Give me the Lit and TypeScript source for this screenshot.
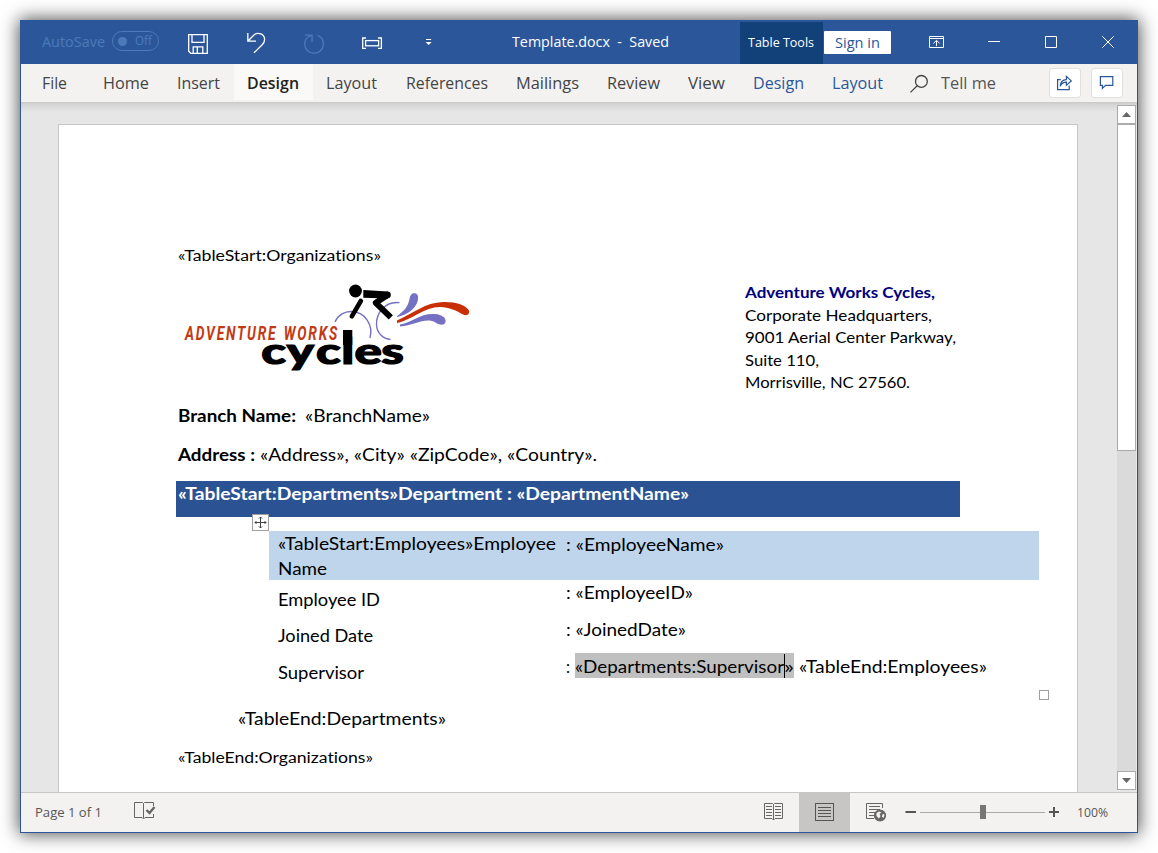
import { LitElement, html, svg, css } from "lit";
import { customElement, property } from "lit/decorators.js";

/** A single run of text, condensed or expanded to an exact advance width. */
@customElement("fit-text")
class FitText extends LitElement {
  @property({ type: Number }) w = 0;
  @property() text = "";
  static styles = css`
    :host { display: inline-block; white-space: pre; vertical-align: baseline; flex: none; font-variant-ligatures: none; }
    .run { display: inline-block; transform-origin: 0 50%; }
  `;
  render() {
    return html`<span class="run">${this.text}</span>`;
  }
  updated() {
    const run = this.renderRoot.querySelector(".run") as HTMLElement;
    run.style.transform = "none";
    const natural = run.getBoundingClientRect().width;
    this.style.width = `${this.w}px`;
    if (natural > 0) {
      run.style.transform = `scaleX(${this.w / natural})`;
      run.style.marginRight = `${this.w - natural}px`;
    }
  }
}

const t = (text: string, w: number) => html`<fit-text .text=${text} .w=${w}></fit-text>`;

@customElement("title-bar")
class TitleBar extends LitElement {
  static styles = css`
    :host { display: flex; height: 44px; background: #2b579a; color: #fff; font: 14px/22px "Open Sans", sans-serif; align-items: flex-start; padding-left: 22px; box-sizing: border-box; }
    svg { display: block; flex: none; }
    .auto { color: #4c7ab8; margin-top: 11px; }
    .toggle { box-sizing: border-box; width: 47px; height: 20px; border: 1px solid #4c7ab8; border-radius: 10px; margin: 11px 0 0 7px; display: flex; align-items: center; padding-left: 5px; gap: 8px; font-size: 12px; line-height: 20px; color: #4c7ab8; }
    .dot { width: 9px; height: 9px; border-radius: 50%; background: #4c7ab8; flex: none; }
    .quick { margin: 11px 0 0 27px; }
    .name { margin: 11px 0 0 78px; }
    .tools { background: #124078; width: 83px; height: 42px; margin: 2px 0 0 71px; padding-left: 8px; box-sizing: border-box; font-size: 12.5px; line-height: 41px; }
    .sign { background: #fff; color: #2b579a; width: 67px; height: 23px; margin: 11px 0 0 1px; padding-left: 11px; box-sizing: border-box; line-height: 24px; border-radius: 1px; }
    .ctl { margin: 13px 0 0 35px; }
  `;
  render() {
    return html`
      <span class="auto">${t("AutoSave", 63)}</span>
      <span class="toggle"><i class="dot"></i>${t("Off", 17)}</span>
      <svg class="quick" width="248" height="24" viewBox="186 31 248 24" fill="none" stroke="#fff" stroke-width="1.3">
        <path d="M188.7 34.7H207.3V53.3H190.8L188.7 51.2ZM192 34.7V42.3H204V34.7M193.2 53V46.8H202.8V53M197.3 47V53" />
        <path d="M247.8 33V41.2H256M248.2 40.8L254.5 34.6C258 31.8 264.6 34 264.6 39.5C264.6 42 263.5 43.5 262 45L254 52.8" />
        <path stroke="#4c7ab8" d="M305 35.2H312V42M311.6 35.6C307.5 36 304.7 40 304.7 44C304.7 49 308.7 53.3 314 53.3C319.4 53.3 323.4 49 323.4 44C323.4 39.8 321 36.5 317.6 35.3" />
        <path d="M366 38H362.7V48.4H366M378 38H381.4V48.4H378" />
        <rect x="365.6" y="40.6" width="13" height="5.2" />
        <path d="M426 39.5H431.2" stroke-width="1" />
        <path d="M425.6 42H431.6L428.6 45Z" fill="#fff" stroke="none" />
      </svg>
      <span class="name">${t("Template.docx  -  Saved", 157)}</span>
      <span class="tools">${t("Table Tools", 66)}</span>
      <span class="sign">${t("Sign in", 45)}</span>
      <svg class="ctl" width="192" height="18" viewBox="926 33 192 18" fill="none" stroke="#fff" stroke-width="1">
        <path d="M929.5 36.5H943.5V47.5H929.5ZM929.5 38.5H943.5M936.5 46V40.6M933.4 43.4L936.5 40.3L939.6 43.4" />
        <path d="M988 41.5H1000M1045.5 36.5H1056.5V47.5H1045.5ZM1102.3 36.3L1113.7 47.7M1113.7 36.3L1102.3 47.7" />
      </svg>
    `;
  }
}

const TABS: [string, number, string][] = [
  ["File", 25, "file"], ["Home", 46, ""], ["Insert", 43, "before"], ["Design", 52, "active"], ["Layout", 51, ""],
  ["References", 82, "refs"], ["Mailings", 63, ""], ["Review", 53, ""], ["View", 37, ""], ["Design", 51, "ctx"], ["Layout", 51, "ctx"],
];

@customElement("ribbon-tabs")
class RibbonTabs extends LitElement {
  static styles = css`
    :host { display: flex; height: 38px; background: #f3f2f1; color: #444; font: 16.5px/38px "Open Sans", sans-serif; padding-left: 7px; position: relative; box-sizing: border-box; }
    .tab { padding: 0 14px; height: 36px; flex: none; }
    .file { padding-right: 22px; }
    .before { padding-right: 14px; }
    .active { background: #faf9f8; color: #222; font-weight: 600; padding: 0 14px 0 13px; }
    .refs { padding-left: 15px; }
    .active + .tab { padding-left: 13px; }
    .ctx { color: #2b579a; }
    .tell { color: #555; margin-left: 12px; }
    svg { display: block; flex: none; }
    .glass { margin: 10px 0 0 13px; }
    .btns { display: flex; gap: 10px; margin: 4px 0 0 53px; }
    .btn { box-sizing: border-box; width: 32px; height: 30px; background: #fff; border: 1px solid #e1dfdd; border-radius: 3px; }
  `;
  render() {
    return html`
      ${TABS.map(([label, w, kind]) => html`<span class="tab ${kind}">${t(label, w)}</span>`)}
      <svg class="glass" width="19" height="20" viewBox="910 74 19 20" fill="none" stroke="#444" stroke-width="1.3">
        <circle cx="921.4" cy="81.4" r="5.9" /><path d="M917.2 85.7L910.4 92.4" />
      </svg>
      <span class="tell">${t("Tell me", 55)}</span>
      <div class="btns">
        <span class="btn"><svg width="30" height="28" viewBox="1049 69 30 28" fill="none" stroke="#2b579a" stroke-width="1.2">
          <path d="M1059.8 79.6H1056.6V89.6H1068.2V85.4M1059.2 86.3C1059.4 82 1062 79.8 1065.4 79.6V76.4L1070.3 80.9L1065.4 85.2V82.2C1062.6 82.2 1060.6 83.4 1059.2 86.3Z" />
        </svg></span>
        <span class="btn"><svg width="30" height="28" viewBox="1091 69 30 28" fill="none" stroke="#2b579a" stroke-width="1.2">
          <path d="M1099.4 76.6H1111.8V85.4H1104.6L1101.4 88.3V85.4H1099.4Z" />
        </svg></span>
      </div>
    `;
  }
}

@customElement("cycles-logo")
class CyclesLogo extends LitElement {
  static styles = css`
    :host { display: block; width: 302px; height: 104px; }
    svg { display: block; overflow: visible; }
    .works { font: italic 700 20.5px Roboto, sans-serif; fill: #c23a13; letter-spacing: 2.6px; word-spacing: 2px; }
    .cycles { font: 900 36px Lato, sans-serif; fill: #000; stroke: #000; stroke-width: 1.2px; }
  `;
  render() {
    return html`<svg width="302" height="104" viewBox="178 281 302 104" fill="none">
      <path d="M335 322C338 315 345 311 352 311.5C365 312 373.500 325 370 338" stroke="#7470c4" stroke-width="1.4" />
      <path d="M399.500 302.600C385 301 376 313 376.500 325C377 333 383 339 390.500 339.500" stroke="#7470c4" stroke-width="1.4" />
      <path d="M397 316C404 311 408 307 409.500 299C410.500 293.500 413 292.500 416 293.500C419 295 418.500 300 416.500 304C413 311 405 315.500 397 317Z" fill="#7470c4" />
      <path d="M400 324.500C413 322 420 313 435 314C442 314.500 446.500 318 445.500 322C444.500 326 439 325 435.500 322.500C426 316.500 414 325.500 400 326.500Z" fill="#7470c4" />
      <path d="M397 320.500C414 313 425 302.500 443 302C455 301.600 466 305 469 310.500C470 314 467 316.500 463 314.500C457 311 449 307 440 307C424 307 414 319 397 323Z" fill="#c92f05" />
      <circle cx="355.500" cy="291" r="6.400" fill="#000" />
      <path d="M363.300 290L388 291.600V298.500L363.300 297.700Z" fill="#000" />
      <path d="M387.600 295L375.800 302.800L390.800 317.300" stroke="#000" stroke-width="6" stroke-linejoin="round" />
      <circle cx="387.500" cy="294.900" r="3.300" fill="#000" />
      <path d="M360.800 301L351.800 316.300" stroke="#000" stroke-width="4.600" stroke-linecap="round" />
      <text class="works" x="185" y="340" textLength="154" lengthAdjust="spacingAndGlyphs">ADVENTURE WORKS</text>
      <g transform="translate(262 364.300) scale(1.42 1)">
        <text class="cycles" x="-0.600 17.500 38 55.800 65.200 84" y="0">cycles</text>
      </g>
      <path d="M343 330H352.300V345H343Z" fill="#000" />
    </svg>`;
  }
}

@customElement("doc-page")
class DocPage extends LitElement {
  static styles = css`
    :host { display: block; box-sizing: border-box; width: 1020px; height: 668px; background: #fff; border: 1px solid #c6c6c6; border-bottom: 0; padding: 120px 0 0 119px; color: #000; font: 16.7px/21px Lato, "Open Sans", sans-serif; overflow: hidden; }
    .small { font-size: 15.5px; line-height: 20px; height: 20px; }
    .head { display: flex; height: 113px; margin-top: 16px; }
    .address { margin-left: 265px; font-size: 15.3px; line-height: 22.5px; }
    .address div { height: 22.5px; }
    .company { color: #000080; font-weight: 700; }
    .line { display: flex; height: 21px; line-height: 23px; }
    .branch { margin-top: 11px; gap: 9px; }
    .street { margin-top: 18px; gap: 5px; }
    b { font-weight: 700; }
    .dept { margin: 16px 0 0 -2px; width: 784px; height: 36px; box-sizing: border-box; padding-left: 2px; background: #2b5394; color: #fff; font-weight: 700; line-height: 27px; }
    .table { position: relative; margin: 14px 0 0 91px; width: 770px; line-height: 27px; }
    .row { display: flex; height: 37px; padding-left: 9px; }
    .picked { background: #bfd5ec; height: 49px; }
    .label { width: 288px; padding-top: 6px; }
    .picked .label { padding-top: 0; }
    .second .label { padding-top: 7px; }
    .label div { height: 25px; }
    .value { display: flex; height: 25px; }
    .picked .value { line-height: 29px; }
    .field { background: #c0c0c0; height: 25px; margin: -1px 5px 0 5px; line-height: 29px; display: flex; }
    .caret { width: 1px; height: 24px; margin: 1px -1px 0 0; background: #000; }
    .move { position: absolute; left: -17px; top: -17px; display: block; }
    .size { position: absolute; right: -10px; top: 159px; width: 8px; height: 8px; border: 1px solid #a0a0a0; background: #fff; }
    .enddept { margin: 17px 0 18px 60px; }
  `;
  render() {
    return html`
      <div class="small">${t("«TableStart:Organizations»", 203)}</div>
      <div class="head">
        <cycles-logo></cycles-logo>
        <div class="address">
          <div class="company">${t("Adventure Works Cycles,", 190)}</div>
          <div>${t("Corporate Headquarters,", 187)}</div>
          <div>${t("9001 Aerial Center Parkway,", 211)}</div>
          <div>${t("Suite 110,", 74)}</div>
          <div>${t("Morrisville, NC 27560.", 165)}</div>
        </div>
      </div>
      <div class="line branch"><b>${t("Branch Name:", 118)}</b>${t("«BranchName»", 125)}</div>
      <div class="line street"><b>${t("Address :", 77)}</b>${t("«Address», «City» «ZipCode», «Country».", 337)}</div>
      <div class="dept">${t("«TableStart:Departments»Department : «DepartmentName»", 511)}</div>
      <div class="table">
        <div class="row picked">
          <div class="label"><div>${t("«TableStart:Employees»Employee", 278)}</div><div>${t("Name", 49)}</div></div>
          <div class="value">${t(": «EmployeeName»", 158)}</div>
        </div>
        <div class="row second"><div class="label">${t("Employee ID", 102)}</div><div class="value">${t(": «EmployeeID»", 127)}</div></div>
        <div class="row"><div class="label">${t("Joined Date", 95)}</div><div class="value">${t(": «JoinedDate»", 120)}</div></div>
        <div class="row"><div class="label">${t("Supervisor", 86)}</div>
          <div class="value">${t(":", 4)}<span class="field">${t("«Departments:Supervisor", 209)}<i class="caret"></i>${t("»", 10)}</span>${t("«TableEnd:Employees»", 188)}</div>
        </div>
        <svg class="move" width="17" height="17" fill="none" stroke="#444">
          <rect x=".5" y=".5" width="16" height="16" fill="#fff" stroke="#a0a0a0" />
          <path d="M8.500 3V14M3 8.500H14M7 4.500L8.500 3L10 4.500M7 12.500L8.500 14L10 12.500M4.500 7L3 8.500L4.500 10M12.500 7L14 8.500L12.500 10" />
        </svg>
        <i class="size"></i>
      </div>
      <div class="line enddept">${t("«TableEnd:Departments»", 208)}</div>
      <div class="small">${t("«TableEnd:Organizations»", 195)}</div>
    `;
  }
}

@customElement("status-bar")
class StatusBar extends LitElement {
  static styles = css`
    :host { display: flex; height: 40px; box-sizing: border-box; border-top: 1px solid #c6c6c6; background: #f3f2f1; color: #555; font: 12.5px/40px "Open Sans", sans-serif; padding-left: 14px; }
    svg { display: block; flex: none; }
    .proof { margin: 8px 0 0 32px; }
    .read { margin: 9px 0 0 608px; }
    .print { width: 51px; height: 39px; background: #c8c6c4; margin: 0 15px; padding: 9px 0 0 15px; box-sizing: border-box; }
    .web { margin-top: 9px; }
    .zoom { margin: 9px 17px 0 18px; }
  `;
  render() {
    const lines = (x1: number, x2: number, ys: number[]) => ys.map((y) => svg`<path d="M${x1} ${y}H${x2}" />`);
    return html`
      ${t("Page 1 of 1", 67)}
      <svg class="proof" width="22" height="20" viewBox="134 801 22 20" fill="none" stroke="#666">
        <path d="M143.500 818V803.500L142.500 802.500H134.500V817.500H142L143.500 819L145 817.500H153.500V814M143.500 803.500L144.500 802.500H153.500V806" />
        <path d="M146.500 810L149.500 813L154.500 807" stroke-width="2.400" />
      </svg>
      <svg class="read" width="20" height="20" viewBox="764 802 20 20" fill="none" stroke="#666">
        <path d="M773.500 820V804.500L772.500 803.500H764.500V818.500H772L773.500 820L775 818.500H782.500V803.500H774.500L773.500 804.500" />
        ${lines(766, 772, [806.5, 809.5, 812.5, 815.5])}${lines(775, 781, [806.5, 809.5, 812.5, 815.5])}
      </svg>
      <div class="print"><svg width="20" height="20" viewBox="814 802 20 20" fill="none" stroke="#555">
        <rect x="815.500" y="803.500" width="18" height="17" />${lines(818, 831, [807.5, 810.5, 813.5, 816.5])}
      </svg></div>
      <svg class="web" width="22" height="20" viewBox="865 802 22 20" fill="none" stroke="#666">
        <path d="M874 818.500H866.500V803.500H882.500V808" />${lines(869, 880, [806.5, 809.5])}${lines(869, 876, [812.5])}${lines(869, 874, [815.5])}
        <circle cx="880" cy="815.500" r="5.500" fill="#666" stroke-width="1.200" />
        <path d="M876.500 813L879 811.500L881.500 812.500L879.500 814L880.500 816L879 818.500L876.500 816ZM883 813.500L884.500 815L883.500 818L881.800 816.500Z" fill="#f3f2f1" stroke="none" />
      </svg>
      <svg class="zoom" width="155" height="20" viewBox="905 802 155 20">
        <path d="M905.500 811H916V813H905.500ZM1049 811H1053V807H1055V811H1059V813H1055V817H1053V813H1049Z" fill="#555" />
        <path d="M920 812H1045V813H920Z" fill="#aaa" /><path d="M980 805H986V819H980Z" fill="#767676" />
      </svg>
      ${t("100%", 31)}
    `;
  }
}

@customElement("app-root")
class AppRoot extends LitElement {
  static styles = css`
    :host { display: block; box-sizing: border-box; width: 1158px; height: 853px; padding: 20px 0 0 20px; background: #fff; overflow: hidden; }
    .window { box-sizing: border-box; width: 1118px; height: 813px; border: 1px solid #2b579a; border-top: 0; background: #e6e6e6; box-shadow: 0 0 17px 1px rgba(0, 0, 0, 0.7); display: flex; flex-direction: column; }
    title-bar { margin: 0 -1px; padding-left: 22px; flex: none; }
    ribbon-tabs, status-bar { flex: none; }
    .work { flex: 1; min-height: 0; display: flex; justify-content: space-between; padding-left: 37px; background: linear-gradient(#c8c8c8, #d4d4d4 2px, #e6e6e6 10px); }
    doc-page { margin-top: 22px; }
    .bar { width: 19px; margin: 3px 1px 2px 0; display: flex; flex-direction: column; justify-content: space-between; background: #dadada; }
    .arrow { box-sizing: border-box; height: 19px; background: #fff; border: 1px solid #ababab; display: block; }
    .thumb { box-sizing: border-box; height: 327px; background: #fff; border: 1px solid #ababab; }
    svg { display: block; }
  `;
  render() {
    return html`<div class="window">
      <title-bar></title-bar>
      <ribbon-tabs></ribbon-tabs>
      <div class="work">
        <doc-page></doc-page>
        <div class="bar">
          <div>
            <div class="arrow"><svg width="17" height="17"><path d="M4 11L8.500 6L13 11Z" fill="#666" /></svg></div>
            <div class="thumb"></div>
          </div>
          <div class="arrow"><svg width="17" height="17"><path d="M4 6L8.500 11L13 6Z" fill="#666" /></svg></div>
        </div>
      </div>
      <status-bar></status-bar>
    </div>`;
  }
}
